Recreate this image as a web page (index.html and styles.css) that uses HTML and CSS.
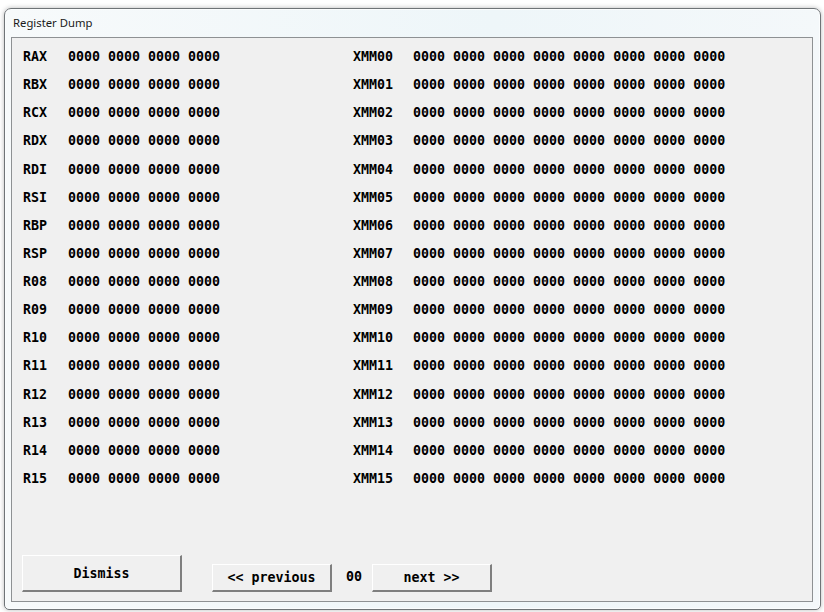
FILE: index.html
```html
<!DOCTYPE html>
<html>
<head>
<meta charset="utf-8">
<title>Register Dump</title>
<link rel="stylesheet" href="styles.css">
</head>
<body>
<div class="window">
  <div class="titlebar">Register Dump</div>
  <div class="panel">
    <div class="regs">
      <span class="lbl">RAX</span><span class="val">0000 0000 0000 0000</span><span class="lbl">XMM00</span><span class="val">0000 0000 0000 0000 0000 0000 0000 0000</span>
      <span class="lbl">RBX</span><span class="val">0000 0000 0000 0000</span><span class="lbl">XMM01</span><span class="val">0000 0000 0000 0000 0000 0000 0000 0000</span>
      <span class="lbl">RCX</span><span class="val">0000 0000 0000 0000</span><span class="lbl">XMM02</span><span class="val">0000 0000 0000 0000 0000 0000 0000 0000</span>
      <span class="lbl">RDX</span><span class="val">0000 0000 0000 0000</span><span class="lbl">XMM03</span><span class="val">0000 0000 0000 0000 0000 0000 0000 0000</span>
      <span class="lbl">RDI</span><span class="val">0000 0000 0000 0000</span><span class="lbl">XMM04</span><span class="val">0000 0000 0000 0000 0000 0000 0000 0000</span>
      <span class="lbl">RSI</span><span class="val">0000 0000 0000 0000</span><span class="lbl">XMM05</span><span class="val">0000 0000 0000 0000 0000 0000 0000 0000</span>
      <span class="lbl">RBP</span><span class="val">0000 0000 0000 0000</span><span class="lbl">XMM06</span><span class="val">0000 0000 0000 0000 0000 0000 0000 0000</span>
      <span class="lbl">RSP</span><span class="val">0000 0000 0000 0000</span><span class="lbl">XMM07</span><span class="val">0000 0000 0000 0000 0000 0000 0000 0000</span>
      <span class="lbl">R08</span><span class="val">0000 0000 0000 0000</span><span class="lbl">XMM08</span><span class="val">0000 0000 0000 0000 0000 0000 0000 0000</span>
      <span class="lbl">R09</span><span class="val">0000 0000 0000 0000</span><span class="lbl">XMM09</span><span class="val">0000 0000 0000 0000 0000 0000 0000 0000</span>
      <span class="lbl">R10</span><span class="val">0000 0000 0000 0000</span><span class="lbl">XMM10</span><span class="val">0000 0000 0000 0000 0000 0000 0000 0000</span>
      <span class="lbl">R11</span><span class="val">0000 0000 0000 0000</span><span class="lbl">XMM11</span><span class="val">0000 0000 0000 0000 0000 0000 0000 0000</span>
      <span class="lbl">R12</span><span class="val">0000 0000 0000 0000</span><span class="lbl">XMM12</span><span class="val">0000 0000 0000 0000 0000 0000 0000 0000</span>
      <span class="lbl">R13</span><span class="val">0000 0000 0000 0000</span><span class="lbl">XMM13</span><span class="val">0000 0000 0000 0000 0000 0000 0000 0000</span>
      <span class="lbl">R14</span><span class="val">0000 0000 0000 0000</span><span class="lbl">XMM14</span><span class="val">0000 0000 0000 0000 0000 0000 0000 0000</span>
      <span class="lbl">R15</span><span class="val">0000 0000 0000 0000</span><span class="lbl">XMM15</span><span class="val">0000 0000 0000 0000 0000 0000 0000 0000</span>
    </div>
    <div class="footer">
      <button class="btn btn-dismiss">Dismiss</button>
      <button class="btn btn-nav btn-prev">&lt;&lt; previous</button>
      <span class="page">00</span>
      <button class="btn btn-nav">next &gt;&gt;</button>
    </div>
  </div>
</div>
</body>
</html>
```

FILE: styles.css
```css
html, body {
  margin: 0;
  padding: 0;
  background: #ffffff;
}

body {
  width: 824px;
  height: 612px;
  overflow: hidden;
}

.window {
  box-sizing: border-box;
  margin: 8px 0 0 4px;
  width: 817px;
  height: 602px;
  border: 1px solid #6f7477;
  border-radius: 7px 7px 5px 5px;
  background: linear-gradient(90deg, #f7fafb 0%, #eef6f9 60%, #f4f8fa 100%);
  box-shadow: 0 0 5px rgba(0, 0, 0, 0.28), inset 0 0 0 1px #fbfdfe;
  padding: 0 7px 7px 6px;
  display: flex;
  flex-direction: column;
}

.titlebar {
  height: 28px;
  box-sizing: border-box;
  padding: 6px 0 0 2px;
  font-family: "Noto Sans", "Open Sans", sans-serif;
  font-size: 11.3px;
  line-height: 16px;
  color: #1a1a1a;
}

.panel {
  flex: 1;
  box-sizing: border-box;
  border: 1px solid #8e9193;
  background: #f0f0f0;
  display: flex;
  flex-direction: column;
  padding: 5px 0 9px 11px;
  font-family: "DejaVu Sans Mono", "Liberation Mono", monospace;
  font-weight: bold;
  font-size: 13.3px;
  color: #000;
}

.regs {
  display: grid;
  grid-template-columns: 45px 285px 60px auto;
  grid-auto-rows: 28.13px;
  align-items: center;
  white-space: pre;
}

.lbl, .val {
  line-height: 16px;
}

.footer {
  margin-top: auto;
  margin-left: -1px;
  display: flex;
  align-items: flex-end;
}

.btn {
  box-sizing: border-box;
  font-family: "DejaVu Sans Mono", "Liberation Mono", monospace;
  font-weight: bold;
  font-size: 13.3px;
  color: #000;
  background: #f0f0f0;
  border-top: 1px solid #ffffff;
  border-left: 1px solid #ffffff;
  border-right: 2px solid #7f7f7f;
  border-bottom: 2px solid #7f7f7f;
  border-radius: 0;
  padding: 0;
  margin: 0;
}

.btn-dismiss {
  width: 160px;
  height: 37px;
  margin-right: 30px;
}

.btn-nav {
  width: 120px;
  height: 28px;
}

.page {
  width: 40px;
  height: 28px;
  line-height: 26px;
  padding-left: 14px;
  box-sizing: border-box;
}
```
